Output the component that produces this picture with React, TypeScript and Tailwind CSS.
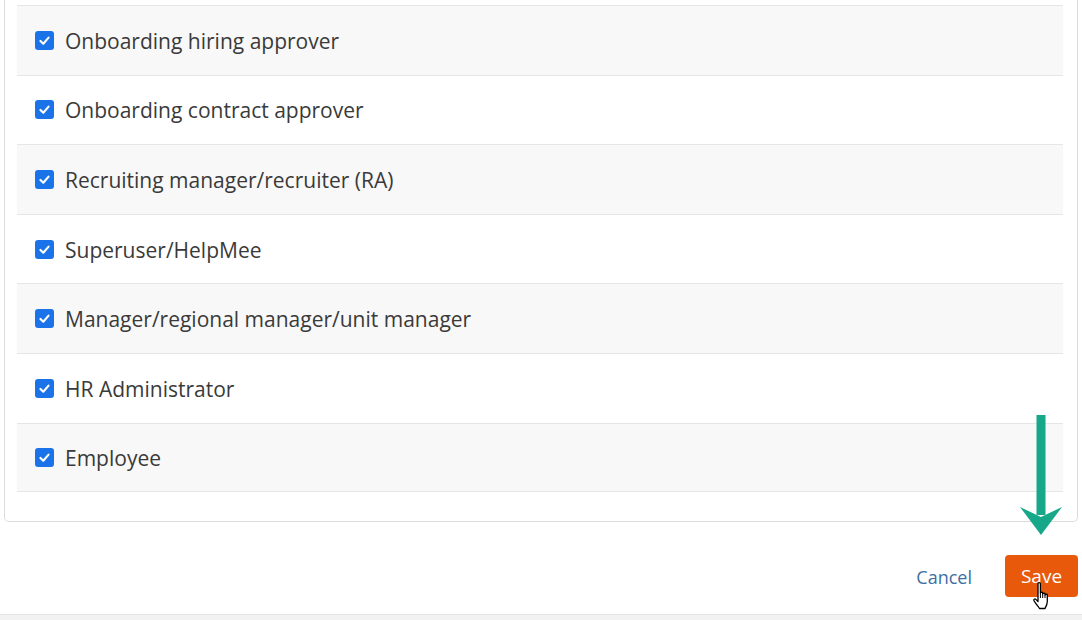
import React from "react";

const roles = [
  "Onboarding hiring approver",
  "Onboarding contract approver",
  "Recruiting manager/recruiter (RA)",
  "Superuser/HelpMee",
  "Manager/regional manager/unit manager",
  "HR Administrator",
  "Employee",
];

function Check() {
  return (
    <span className="w-[19px] h-[19px] rounded-[3px] bg-[#1a73e8] flex items-center justify-center shrink-0">
      <svg width="13" height="13" viewBox="0 0 16 16" fill="none">
        <path d="M3 8.5 L6.5 12 L13 4.5" stroke="white" strokeWidth="2.6" strokeLinecap="round" strokeLinejoin="round" />
      </svg>
    </span>
  );
}

export default function App() {
  return (
    <div className="w-[1082px] h-[620px] bg-white relative overflow-hidden" style={{ fontFamily: "'Open Sans', sans-serif" }}>
      {/* card */}
      <div className="mx-[4px] w-[1074px] border-x border-b border-[#dcdcdc] rounded-b-[5px] pl-[12px] pr-[14px] pt-[5px] pb-[29px]">
        {roles.map((r, i) => (
          <div
            key={r}
            className={`h-[69.6px] flex items-center gap-[11px] pl-[18px] border-t border-[#e6e6e6] ${i % 2 === 0 ? "bg-[#f8f8f8]" : "bg-white"} ${i === roles.length - 1 ? "border-b" : ""}`}
          >
            <Check />
            <span className="text-[21px] text-[#3a3a3a] leading-none pt-[2px]">{r}</span>
          </div>
        ))}
      </div>

      {/* footer actions */}
      <div className="flex items-center justify-end gap-[33px] pr-[4px] pt-[33px]">
        <span className="text-[18px] text-[#3d6fa3] pt-[2px]">Cancel</span>
        <button className="w-[73px] h-[42px] rounded-[4px] bg-[#e8590c] text-white text-[19px] flex items-center justify-center">
          Save
        </button>
      </div>
      <div className="absolute left-0 right-0 top-[614px] h-[6px] bg-[#f2f2f2] border-t border-[#e4e4e4]" />

      {/* annotation arrow */}
      <svg className="absolute left-[1018px] top-[413px]" width="46" height="124" viewBox="0 0 46 124">
        <rect x="18.5" y="2" width="9" height="100" fill="#17a88a" />
        <path d="M2 94 L23 122 L44 94 L23 104 Z" fill="#17a88a" />
      </svg>

      {/* hand cursor */}
      <svg className="absolute left-[1031px] top-[581px]" width="24" height="30" viewBox="0 0 24 30">
        <path
          d="M7 2.5c0-1.2 2.4-1.2 2.4 0V12c0-1 2.3-1 2.3 0v1c0-1 2.3-1 2.3 0v1c0-1 2.3-1 2.3 0v6.5c0 3-1.5 5.5-2.3 7H8.5c-1-1.5-4.5-6-5.5-7.8-.7-1.2.8-2.4 1.9-1.3L7 20.5V2.5z"
          fill="white"
          stroke="black"
          strokeWidth="1.3"
          strokeLinejoin="round"
        />
        <path d="M9.4 12v5M11.7 13v4M14 14v3" stroke="black" strokeWidth="1" />
      </svg>
    </div>
  );
}
